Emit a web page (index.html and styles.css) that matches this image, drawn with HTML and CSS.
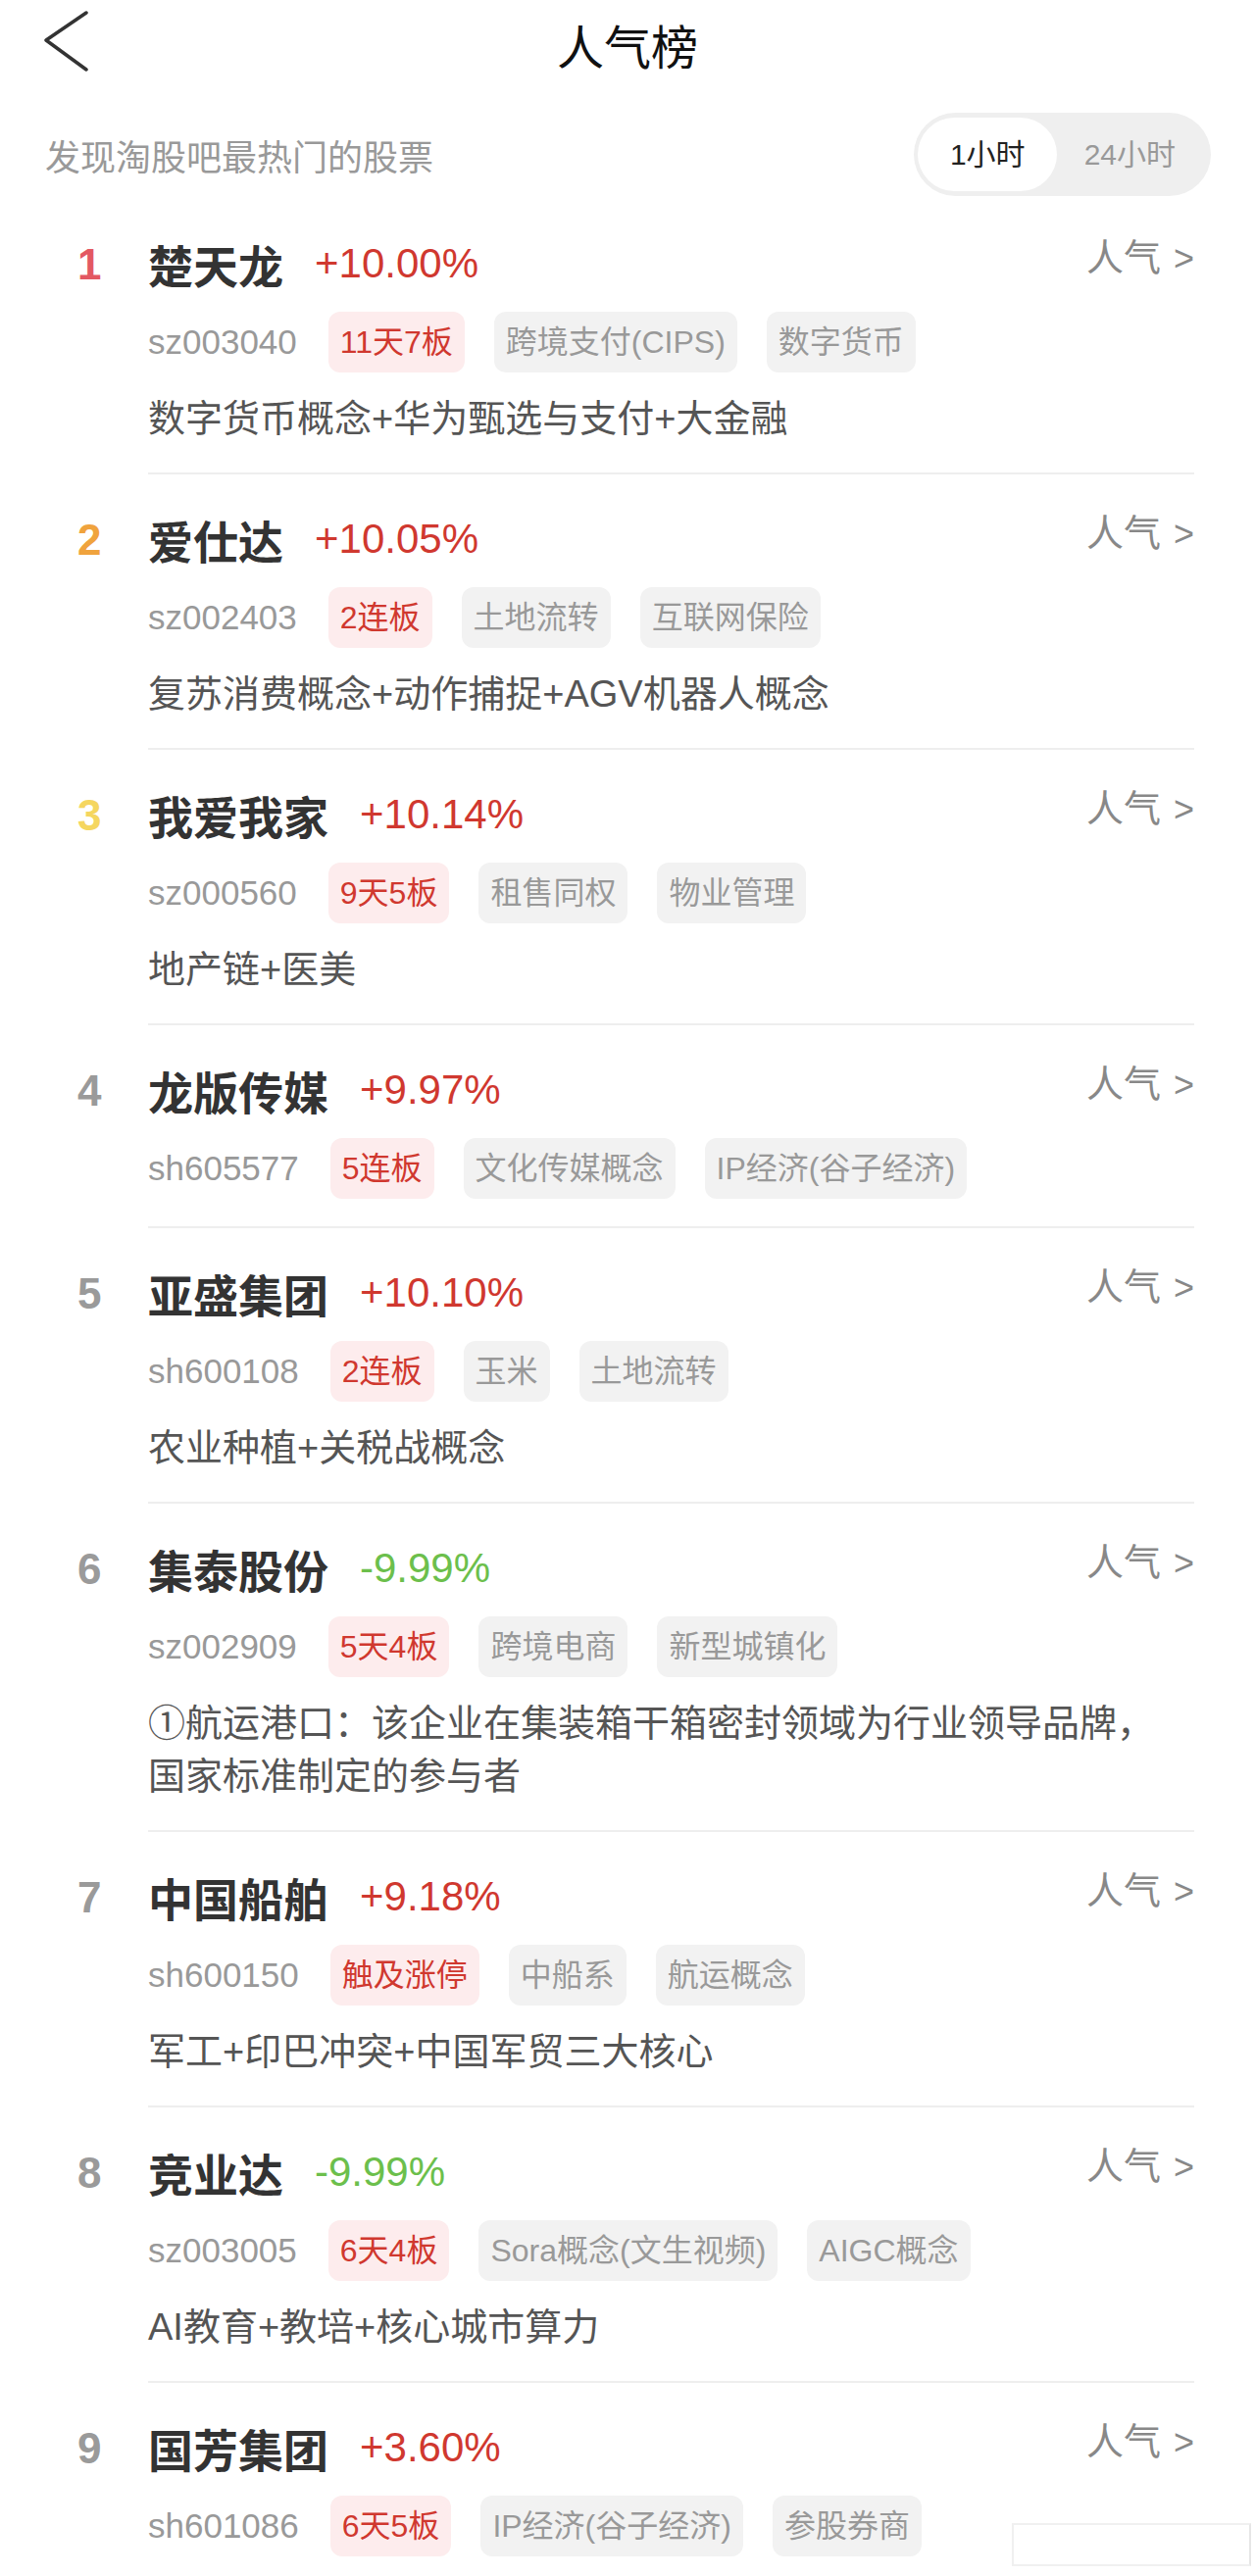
FILE: index.html
```html
<!DOCTYPE html>
<html lang="zh-CN">
<head>
    <meta charset="UTF-8">
    <meta name="viewport" content="width=device-width, initial-scale=1.0">
    <title>人气榜</title>
    <link rel="stylesheet" href="styles.css">
</head>
<body>
    <div class="topbar">
        <a class="back" href="#">
            <svg width="50" height="64" viewBox="0 0 50 64">
                <polyline points="44,2 3,30 44,60" fill="none" stroke="#333" stroke-width="3.5" stroke-linecap="round" stroke-linejoin="round"/>
            </svg>
        </a>
        <h1>人气榜</h1>
    </div>

    <div class="subbar">
        <span class="subtitle">发现淘股吧最热门的股票</span>
        <div class="toggle">
            <span class="opt active">1小时</span>
            <span class="opt">24小时</span>
        </div>
    </div>

    <ul class="list">
        <li class="item">
            <span class="rank r1">1</span>
            <div class="body">
                <div class="head">
                    <span class="name">楚天龙</span>
                    <span class="chg up">+10.00%</span>
                    <span class="pop">人气<i>&gt;</i></span>
                </div>
                <div class="tags">
                    <span class="code">sz003040</span>
                    <span class="tag hot">11天7板</span>
                    <span class="tag">跨境支付(CIPS)</span>
                    <span class="tag">数字货币</span>
                </div>
                <p class="desc">数字货币概念+华为甄选与支付+大金融</p>
            </div>
        </li>
        <li class="item">
            <span class="rank r2">2</span>
            <div class="body">
                <div class="head">
                    <span class="name">爱仕达</span>
                    <span class="chg up">+10.05%</span>
                    <span class="pop">人气<i>&gt;</i></span>
                </div>
                <div class="tags">
                    <span class="code">sz002403</span>
                    <span class="tag hot">2连板</span>
                    <span class="tag">土地流转</span>
                    <span class="tag">互联网保险</span>
                </div>
                <p class="desc">复苏消费概念+动作捕捉+AGV机器人概念</p>
            </div>
        </li>
        <li class="item">
            <span class="rank r3">3</span>
            <div class="body">
                <div class="head">
                    <span class="name">我爱我家</span>
                    <span class="chg up">+10.14%</span>
                    <span class="pop">人气<i>&gt;</i></span>
                </div>
                <div class="tags">
                    <span class="code">sz000560</span>
                    <span class="tag hot">9天5板</span>
                    <span class="tag">租售同权</span>
                    <span class="tag">物业管理</span>
                </div>
                <p class="desc">地产链+医美</p>
            </div>
        </li>
        <li class="item">
            <span class="rank">4</span>
            <div class="body">
                <div class="head">
                    <span class="name">龙版传媒</span>
                    <span class="chg up">+9.97%</span>
                    <span class="pop">人气<i>&gt;</i></span>
                </div>
                <div class="tags">
                    <span class="code">sh605577</span>
                    <span class="tag hot">5连板</span>
                    <span class="tag">文化传媒概念</span>
                    <span class="tag">IP经济(谷子经济)</span>
                </div>
            </div>
        </li>
        <li class="item">
            <span class="rank">5</span>
            <div class="body">
                <div class="head">
                    <span class="name">亚盛集团</span>
                    <span class="chg up">+10.10%</span>
                    <span class="pop">人气<i>&gt;</i></span>
                </div>
                <div class="tags">
                    <span class="code">sh600108</span>
                    <span class="tag hot">2连板</span>
                    <span class="tag">玉米</span>
                    <span class="tag">土地流转</span>
                </div>
                <p class="desc">农业种植+关税战概念</p>
            </div>
        </li>
        <li class="item">
            <span class="rank">6</span>
            <div class="body">
                <div class="head">
                    <span class="name">集泰股份</span>
                    <span class="chg down">-9.99%</span>
                    <span class="pop">人气<i>&gt;</i></span>
                </div>
                <div class="tags">
                    <span class="code">sz002909</span>
                    <span class="tag hot">5天4板</span>
                    <span class="tag">跨境电商</span>
                    <span class="tag">新型城镇化</span>
                </div>
                <p class="desc">①航运港口：该企业在集装箱干箱密封领域为行业领导品牌，国家标准制定的参与者</p>
            </div>
        </li>
        <li class="item">
            <span class="rank">7</span>
            <div class="body">
                <div class="head">
                    <span class="name">中国船舶</span>
                    <span class="chg up">+9.18%</span>
                    <span class="pop">人气<i>&gt;</i></span>
                </div>
                <div class="tags">
                    <span class="code">sh600150</span>
                    <span class="tag hot">触及涨停</span>
                    <span class="tag">中船系</span>
                    <span class="tag">航运概念</span>
                </div>
                <p class="desc">军工+印巴冲突+中国军贸三大核心</p>
            </div>
        </li>
        <li class="item">
            <span class="rank">8</span>
            <div class="body">
                <div class="head">
                    <span class="name">竞业达</span>
                    <span class="chg down">-9.99%</span>
                    <span class="pop">人气<i>&gt;</i></span>
                </div>
                <div class="tags">
                    <span class="code">sz003005</span>
                    <span class="tag hot">6天4板</span>
                    <span class="tag">Sora概念(文生视频)</span>
                    <span class="tag">AIGC概念</span>
                </div>
                <p class="desc">AI教育+教培+核心城市算力</p>
            </div>
        </li>
        <li class="item">
            <span class="rank">9</span>
            <div class="body">
                <div class="head">
                    <span class="name">国芳集团</span>
                    <span class="chg up">+3.60%</span>
                    <span class="pop">人气<i>&gt;</i></span>
                </div>
                <div class="tags">
                    <span class="code">sh601086</span>
                    <span class="tag hot">6天5板</span>
                    <span class="tag">IP经济(谷子经济)</span>
                    <span class="tag">参股券商</span>
                </div>
            </div>
        </li>
    </ul>

    <div class="float-box"></div>
</body>
</html>
```

FILE: styles.css
```css
body {
    margin: 0;
    background: #fff;
    font-family: "Liberation Sans", "Noto Sans CJK SC", sans-serif;
    color: #333;
    overflow: hidden;
}
.topbar {
    position: relative;
    height: 96px;
    display: flex;
    align-items: center;
    justify-content: center;
}
.back {
    position: absolute;
    left: 44px;
    top: 11px;
    display: block;
}
.back svg {
    display: block;
}
h1 {
    margin: 0;
    padding-top: 4px;
    font-size: 48px;
    font-weight: 400;
    color: #111;
    line-height: 60px;
}
.subbar {
    margin-top: 19px;
    height: 85px;
    padding: 0 45px 0 46px;
    display: flex;
    align-items: center;
    justify-content: space-between;
}
.subtitle {
    font-size: 36px;
    color: #999;
}
.toggle {
    display: flex;
    align-items: center;
    height: 85px;
    padding: 0 4px;
    background: #efefef;
    border-radius: 43px;
    box-sizing: border-box;
}
.opt {
    font-size: 30px;
    color: #999;
    height: 75px;
    line-height: 75px;
    padding: 0 32px 0 28px;
    border-radius: 38px;
}
.opt.active {
    color: #222;
    background: #fff;
    padding: 0 32px 0 33px;
}
.list {
    list-style: none;
    margin: 3px 0 0;
    padding: 0;
}
.item {
    display: flex;
    padding: 0 62px 0 79px;
}
.rank {
    width: 72px;
    flex-shrink: 0;
    padding-top: 37px;
    line-height: 60px;
    font-size: 44px;
    font-weight: 700;
    color: #9a9a9a;
}
.rank.r1 { color: #e35862; }
.rank.r2 { color: #f0a33d; }
.rank.r3 { color: #f5d660; }
.body {
    flex: 1;
    padding: 36px 0 28px;
    border-bottom: 2px solid #eeeeee;
}
.head {
    display: flex;
    align-items: center;
    height: 60px;
}
.name {
    font-size: 46px;
    font-weight: 700;
    color: #333;
}
.chg {
    margin-left: 32px;
    font-size: 42px;
}
.chg.up { color: #d0382f; }
.chg.down { color: #6cbf4c; }
.pop {
    margin-left: auto;
    align-self: flex-start;
    line-height: 48px;
    font-size: 38px;
    color: #888;
}
.pop i {
    font-style: normal;
    margin-left: 13px;
    font-size: 36px;
}
.tags {
    margin-top: 19px;
    display: flex;
    align-items: center;
    gap: 30px;
    height: 62px;
}
.code {
    font-size: 35px;
    color: #999;
    margin-right: 2px;
}
.tag {
    height: 62px;
    line-height: 62px;
    padding: 0 12px;
    font-size: 32px;
    color: #999;
    background: #f2f2f2;
    border-radius: 12px;
}
.tag.hot {
    color: #d0382f;
    background: #fdeced;
}
.desc {
    margin: 20px 0 0;
    padding-right: 30px;
    font-size: 38px;
    line-height: 54px;
    color: #555;
}
.float-box {
    position: absolute;
    left: 1032px;
    top: 2574px;
    width: 240px;
    height: 40px;
    border: 2px solid #f0f0f0;
    border-right-color: #e6e6e6;
    background: #fff;
}
```
